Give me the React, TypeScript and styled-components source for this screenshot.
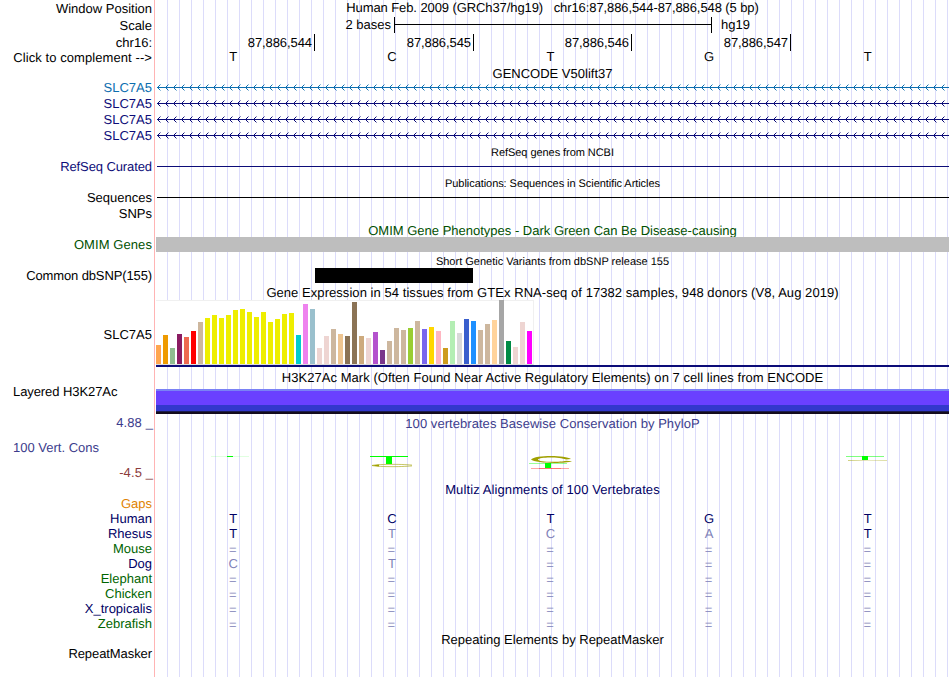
import React from 'react';
import styled, { createGlobalStyle } from 'styled-components';

const GlobalStyle = createGlobalStyle`
  body {
    margin: 0;
    background: #fff;
    overflow: hidden;
  }
`;

const Browser = styled.main`
  display: flex;
  width: 949px;
  height: 677px;
  overflow: hidden;
  font-family: 'Liberation Sans', Arial, sans-serif;
  font-size: 13px;
  line-height: 15px;
  color: #000;
  white-space: pre;
  text-rendering: geometricPrecision;
`;

const Labels = styled.div`
  display: flex;
  flex-direction: column;
  width: 154px;
  border-right: 1px solid #ffb4b4;
`;

const Label = styled.div<{ $h: number; $color?: string; $left?: boolean; $ls?: number; $end?: number }>`
  display: flex;
  flex: none;
  align-items: flex-end;
  justify-content: ${({ $left }) => ($left ? 'flex-start' : 'flex-end')};
  height: ${({ $h }) => $h}px;
  padding: 0 ${({ $end = 2 }) => $end}px 0 ${({ $left }) => ($left ? 13 : 0)}px;
  color: ${({ $color = '#000' }) => $color};
  letter-spacing: ${({ $ls = 0 }) => $ls}px;
`;

const Tracks = styled.div`
  display: flex;
  flex-direction: column;
  flex: 1;
  margin-left: 1px;
  background: repeating-linear-gradient(
    to right,
    transparent 0 11px,
    #dcdcfa 11px 12px
  );
`;

const Title = styled.div<{ $h: number; $top?: number; $color?: string; $small?: boolean; $ls?: number }>`
  flex: none;
  box-sizing: border-box;
  height: ${({ $h }) => $h}px;
  padding-top: ${({ $top = 0 }) => $top}px;
  overflow: hidden;
  text-align: center;
  color: ${({ $color = '#000' }) => $color};
  font-size: ${({ $small }) => ($small ? 11 : 13)}px;
  line-height: ${({ $small }) => ($small ? 14 : 15)}px;
  letter-spacing: ${({ $ls = 0 }) => $ls}px;
`;

const ScaleRow = styled.div`
  display: flex;
  flex: none;
  height: 16px;
  margin-top: 2px;
`;

const ScaleStart = styled.span`
  width: 235px;
  margin-right: 3px;
  text-align: right;
`;

const ScaleBar = styled.span`
  display: flex;
  align-items: center;
  width: 316px;
  margin-right: 9px;
  border: solid #000;
  border-width: 0 1px;

  &::before {
    content: '';
    flex: 1;
    height: 1px;
    margin-bottom: 1px;
    background: #000;
  }
`;

const Positions = styled.div`
  display: grid;
  flex: none;
  grid-template-columns: 159px 159px 158px 159px;
  height: 15px;
  margin-top: 1px;
`;

const Position = styled.span`
  padding-right: 2px;
  border-right: 1px solid #000;
  text-align: right;
  line-height: 17px;
  letter-spacing: -0.08px;
`;

const BaseRow = styled.div<{ $color?: string }>`
  display: grid;
  flex: none;
  grid-template-columns: repeat(5, 1fr);
  height: 15px;
  color: ${({ $color = '#000' }) => $color};
`;

const Base = styled.span<{ $faded?: boolean; $gap?: boolean }>`
  padding: ${({ $gap }) => ($gap ? 1 : 0)}px ${({ $gap }) => ($gap ? 5 : 4)}px 0 0;
  text-align: center;
  color: ${({ $faded }) => ($faded ? '#8082b8' : 'inherit')};
`;

const Gene = styled.svg`
  display: block;
  flex: none;
  width: 793px;
  height: 16px;
`;

const Line = styled.div<{ $color: string; $before: number }>`
  flex: none;
  height: 1px;
  margin: ${({ $before }) => $before}px 0 0 1px;
  background: ${({ $color }) => $color};
`;

const OmimBar = styled.div`
  flex: none;
  height: 15px;
  background: #bebebe;
`;

const SnpBar = styled.div`
  flex: none;
  width: 158px;
  height: 15px;
  margin: 1px 0 2px 159px;
  background: #000;
`;

const Tissues = styled.div`
  display: flex;
  flex: none;
  align-items: flex-end;
  gap: 2px;
  box-sizing: border-box;
  width: 378px;
  height: 65px;
  border: solid #f0f0f0;
  border-width: 1px 1px 1px 0;
  border-bottom-color: #ddd;
  background: #fff;
`;

const Tissue = styled.div<{ $color: string }>`
  flex: none;
  width: 5px;
  background: ${({ $color }) => $color};
`;

const GeneModel = styled.div`
  flex: none;
  height: 2px;
  background: #0c0c78;
`;

const Histone = styled.div`
  flex: none;
  height: 25px;
  margin-top: 4px;
  background: linear-gradient(
    #7a82f5 0 2px,
    #6a40ff 2px 16px,
    #3338cc 16px 22px,
    #1c1c50 22px 23px,
    #140c1c 23px
  );
`;

const Logo = styled.svg`
  display: block;
  flex: none;
  width: 793px;
  height: 51px;
`;

const NAVY = '#0c0c78';
const BLUE = '#000064';
const GREEN = '#006400';
const CONS = '#3c3c8c';

const positions = ['87,886,544', '87,886,545', '87,886,546', '87,886,547'];

const genes = ['#0c6eaf', NAVY, NAVY, NAVY];

const tissues: [string, number][] = [
  ['#ffa54f', 19], ['#ee9a00', 29], ['#8fbc8f', 16], ['#8b1c62', 30],
  ['#ee6a50', 27], ['#ff0000', 33], ['#cdb79e', 42], ['#eeee00', 46],
  ['#eeee00', 49], ['#eeee00', 46], ['#eeee00', 49], ['#eeee00', 54],
  ['#eeee00', 55], ['#eeee00', 52], ['#eeee00', 47], ['#eeee00', 52],
  ['#eeee00', 42], ['#eeee00', 45], ['#eeee00', 50], ['#eeee00', 51],
  ['#00cdcd', 29], ['#ee82ee', 60], ['#9ac0cd', 55], ['#eed5d2', 16],
  ['#eed5d2', 28], ['#cdb79e', 35], ['#eec591', 30], ['#8b7355', 28],
  ['#8b7355', 62], ['#cdaa7d', 28], ['#eed5d2', 26], ['#b452cd', 32],
  ['#7a378b', 14], ['#cdb79e', 23], ['#cdb79e', 36], ['#cdb79e', 34],
  ['#9acd32', 36], ['#cdb79e', 43], ['#7a67ee', 35], ['#ffd700', 37],
  ['#ffb6c1', 33], ['#cd9b1d', 16], ['#b4eeb4', 43], ['#d9d9d9', 31],
  ['#3a5fcd', 45], ['#1e90ff', 43], ['#cdb79e', 34], ['#cdb79e', 40],
  ['#ffd39b', 44], ['#a6a6a6', 64], ['#008b45', 23], ['#eed5d2', 17],
  ['#eed5d2', 42], ['#ff00ff', 33],
];

// lower case marks a base that differs from the human one
const species = [
  { name: 'Human', color: BLUE, bases: 'TCTGT' },
  { name: 'Rhesus', color: BLUE, bases: 'TtcaT' },
  { name: 'Mouse', color: GREEN, bases: '=====' },
  { name: 'Dog', color: BLUE, bases: 'ct===' },
  { name: 'Elephant', color: GREEN, bases: '=====' },
  { name: 'Chicken', color: GREEN, bases: '=====' },
  { name: 'X_tropicalis', color: BLUE, bases: '=====' },
  { name: 'Zebrafish', color: GREEN, bases: '=====' },
];

const SideLabels: React.FC = () => (
  <Labels>
    <Label $h={16}>Window Position</Label>
    <Label $h={17}>Scale</Label>
    <Label $h={17}>chr16:</Label>
    <Label $h={15} $ls={0.08}>{'Click to complement -->'}</Label>
    <Label $h={30} $color={genes[0]}>SLC7A5</Label>
    <Label $h={16} $color={NAVY}>SLC7A5</Label>
    <Label $h={16} $color={NAVY}>SLC7A5</Label>
    <Label $h={16} $color={NAVY}>SLC7A5</Label>
    <Label $h={31} $color={NAVY} $ls={-0.1}>RefSeq Curated</Label>
    <Label $h={31}>Sequences</Label>
    <Label $h={16}>SNPs</Label>
    <Label $h={31} $color="#005000" $ls={0.08}>OMIM Genes</Label>
    <Label $h={31} $ls={-0.12}>Common dbSNP(155)</Label>
    <Label $h={59}>SLC7A5</Label>
    <Label $h={57} $left $ls={-0.08}>Layered H3K27Ac</Label>
    <Label $h={31} $color={CONS} $end={1} $ls={0.1}>4.88 _</Label>
    <Label $h={25} $color={CONS} $left>100 Vert. Cons</Label>
    <Label $h={25} $color="#8c3c3c" $end={1} $ls={0.1}>-4.5 _</Label>
    <Label $h={31} $color="#e08200">Gaps</Label>
    {species.map(({ name, color }) => (
      <Label key={name} $h={15} $color={color}>{name}</Label>
    ))}
    <Label $h={30} $ls={-0.08}>RepeatMasker</Label>
  </Labels>
);

const GeneTrack: React.FC<{ id: string; color: string }> = ({ id, color }) => (
  <Gene>
    <defs>
      <pattern id={id} x="1" width="8" height="16" patternUnits="userSpaceOnUse">
        <g fill={color} shapeRendering="crispEdges">
          <path d="M0 6h1v1h-1zM1 5h1v1h-1zM1 7h1v1h-1zM2 4h1v1h-1zM2 8h1v1h-1z" />
          <path opacity="0.45" d="M3 3h1v1h-1zM3 9h1v1h-1z" />
        </g>
      </pattern>
    </defs>
    <rect x="1" y="6" width="792" height="1" fill={color} />
    <rect x="1" width="792" height="16" fill={`url(#${id})`} />
  </Gene>
);

const Conservation: React.FC = () => (
  <Logo>
    <defs>
      <linearGradient id="olive">
        <stop offset="0" stopColor="#a0a000" />
        <stop offset="0.5" stopColor="#a0a000" stopOpacity="0.45" />
        <stop offset="1" stopColor="#a0a000" stopOpacity="0.7" />
      </linearGradient>
    </defs>
    <rect x="55" y="25" width="38" height="1" fill="#00ff00" opacity="0.12" />
    <rect x="71" y="25" width="6" height="1" fill="#00ff00" />

    <rect x="214" y="25" width="38" height="1" fill="#00ff00" />
    <rect x="230" y="25" width="6" height="8" fill="#00ff00" />
    <path
      d="M256 34.1C244 32.9 220 33.2 216 34.5C220 35.8 244 36.1 256 34.9"
      fill="none"
      stroke="#a0a000"
      strokeWidth="0.6"
    />
    <path d="M216 34.5L223 33.5V35.5Z" fill="#a0a000" />

    <path
      d="M375 28.5C379 24 409 24 415 28L410 28.4C404 25.8 383 25.6 382 28.5C382 31.4 404 31.2 410 29.7L416 30.2C409 32.8 379 32.5 375 28.5Z"
      fill="#a0a000"
    />
    <rect x="373" y="32" width="38" height="1" fill="#00ff00" opacity="0.4" />
    <rect x="389" y="32" width="6" height="5" fill="#00ff00" />
    <rect x="375" y="37" width="38" height="1" fill="#ff0000" opacity="0.35" />
    <rect x="383" y="37" width="22" height="1" fill="#ff0000" opacity="0.3" />

    <rect x="690" y="25" width="38" height="1" fill="#00ff00" opacity="0.5" />
    <rect x="692" y="29" width="39" height="1" fill="url(#olive)" opacity="0.5" />
    <rect x="706" y="25" width="6" height="4" fill="#00ff00" />
  </Logo>
);

const App: React.FC = () => (
  <>
    <GlobalStyle />
    <Browser>
      <SideLabels />
      <Tracks>
        <Title $h={15} $ls={-0.09}>
          {'Human Feb. 2009 (GRCh37/hg19)   chr16:87,886,544-87,886,548 (5 bp)'}
        </Title>
        <ScaleRow>
          <ScaleStart>2 bases</ScaleStart>
          <ScaleBar />
          <span>hg19</span>
        </ScaleRow>
        <Positions>
          {positions.map((position) => (
            <Position key={position}>{position}</Position>
          ))}
        </Positions>
        <BaseRow>
          {species[0].bases.split('').map((base, i) => (
            <Base key={i}>{base}</Base>
          ))}
        </BaseRow>
        <Title $h={17} $top={2}>GENCODE V50lift37</Title>
        {genes.map((color, i) => (
          <GeneTrack key={i} id={`strand-${i}`} color={color} />
        ))}
        <Title $h={14} $top={1} $small $ls={-0.06}>RefSeq genes from NCBI</Title>
        <Line $color={NAVY} $before={7} />
        <Title $h={23} $top={10} $small $ls={-0.06}>
          Publications: Sequences in Scientific Articles
        </Title>
        <Line $color="#000" $before={7} />
        <Title $h={39} $top={25} $color="#005000">
          OMIM Gene Phenotypes - Dark Green Can Be Disease-causing
        </Title>
        <OmimBar />
        <Title $h={15} $top={3} $small>
          Short Genetic Variants from dbSNP release 155
        </Title>
        <SnpBar />
        <Title $h={15} $ls={0.055}>
          Gene Expression in 54 tissues from GTEx RNA-seq of 17382 samples, 948 donors (V8, Aug 2019)
        </Title>
        <Tissues>
          {tissues.map(([color, height], i) => (
            <Tissue key={i} $color={color} style={{ height }} />
          ))}
        </Tissues>
        <GeneModel />
        <Title $h={18} $top={3} $ls={0.045}>
          H3K27Ac Mark (Often Found Near Active Regulatory Elements) on 7 cell lines from ENCODE
        </Title>
        <Histone />
        <Title $h={17} $top={2} $color={CONS} $ls={0.05}>
          100 vertebrates Basewise Conservation by PhyloP
        </Title>
        <Conservation />
        <Title $h={29} $color={BLUE} $ls={0.1}>Multiz Alignments of 100 Vertebrates</Title>
        {species.map(({ name, bases }) => (
          <BaseRow key={name} $color={BLUE}>
            {bases.split('').map((base, i) => (
              <Base key={i} $gap={base === '='} $faded={base === '=' || base !== base.toUpperCase()}>
                {base.toUpperCase()}
              </Base>
            ))}
          </BaseRow>
        ))}
        <Title $h={16} $top={1}>Repeating Elements by RepeatMasker</Title>
      </Tracks>
    </Browser>
  </>
);

export default App;
